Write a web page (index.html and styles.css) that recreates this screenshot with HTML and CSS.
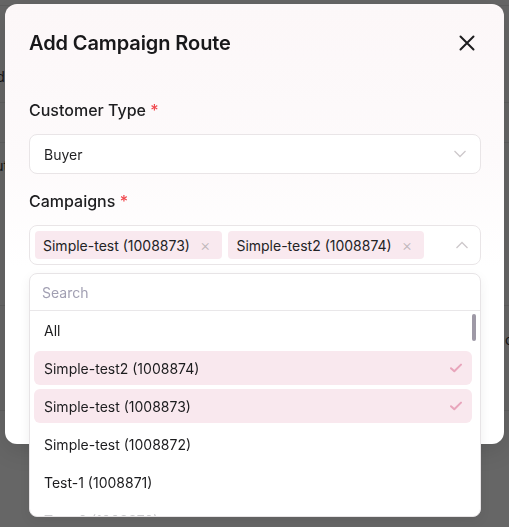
FILE: index.html
```html
<!DOCTYPE html>
<html lang="en">
<head>
    <meta charset="UTF-8">
    <meta name="viewport" content="width=device-width, initial-scale=1.0">
    <title>Add Campaign Route</title>
    <link rel="stylesheet" href="styles.css">
</head>
<body>
    <!-- page behind the overlay -->
    <div class="backdrop">
        <div class="bg-row bg-row-1"></div>
        <div class="bg-row bg-row-2"><span class="bg-text bg-left">Add</span></div>
        <div class="bg-row bg-row-3"></div>
        <div class="bg-row bg-row-4"><span class="bg-text bg-left">Routing</span></div>
        <div class="bg-row bg-row-5"><span class="bg-text bg-right">c</span></div>
        <div class="bg-row bg-row-6"></div>
    </div>

    <div class="modal">
        <div class="modal-header">
            <h1 class="modal-title">Add Campaign Route</h1>
            <button class="close-btn" aria-label="Close">
                <svg width="24" height="24" viewBox="0 0 24 24" fill="none" stroke="#1d1d1f" stroke-width="2" stroke-linecap="round">
                    <path d="M5.5 5.5L18.5 18.5M18.5 5.5L5.5 18.5"/>
                </svg>
            </button>
        </div>

        <div class="modal-body">
            <div class="form-item">
                <label class="form-label">Customer Type <span class="required">*</span></label>
                <div class="select">
                    <span class="select-value">Buyer</span>
                    <svg class="chevron" width="12" height="8" viewBox="0 0 12 8" fill="none" stroke="#cdc8cb" stroke-width="1.3">
                        <path d="M0.5 1L6 6.5L11.5 1"/>
                    </svg>
                </div>
            </div>

            <div class="form-item">
                <label class="form-label">Campaigns <span class="required">*</span></label>
                <div class="select-wrap">
                    <div class="select select-multi">
                        <div class="tags">
                            <span class="tag">Simple-test (1008873) <span class="tag-close">&times;</span></span>
                            <span class="tag">Simple-test2 (1008874) <span class="tag-close">&times;</span></span>
                        </div>
                        <svg class="chevron" width="12" height="8" viewBox="0 0 12 8" fill="none" stroke="#cdc8cb" stroke-width="1.3">
                            <path d="M0.5 7L6 1.5L11.5 7"/>
                        </svg>
                    </div>

                    <div class="dropdown">
                        <div class="dropdown-search">
                            <input type="text" placeholder="Search">
                        </div>
                        <ul class="option-list">
                            <li class="option">All</li>
                            <li class="option selected">Simple-test2 (1008874)
                                <svg width="12" height="10" viewBox="0 0 12 10" fill="none" stroke="#e8a5bb" stroke-width="2" stroke-linecap="round" stroke-linejoin="round"><path d="M1 5.2L4.3 8.3L11 1.6"/></svg>
                            </li>
                            <li class="option selected">Simple-test (1008873)
                                <svg width="12" height="10" viewBox="0 0 12 10" fill="none" stroke="#e8a5bb" stroke-width="2" stroke-linecap="round" stroke-linejoin="round"><path d="M1 5.2L4.3 8.3L11 1.6"/></svg>
                            </li>
                            <li class="option">Simple-test (1008872)</li>
                            <li class="option">Test-1 (1008871)</li>
                            <li class="option option-faded">Test-0 (1008870)</li>
                        </ul>
                        <div class="scroll-thumb"></div>
                    </div>
                </div>
            </div>
        </div>
    </div>
</body>
</html>
```

FILE: styles.css
```css
/* base */
body {
    margin: 0;
    height: 527px;
    overflow: hidden;
    background-color: #666666;
    font-family: 'Inter', 'Liberation Sans', sans-serif;
    color: #1d1d1f;
}

/* page behind the dimmed overlay */
.backdrop {
    font-size: 14px;
}
.bg-row {
    border-bottom: 1px solid #5e5e5e;
    box-sizing: border-box;
    overflow: hidden;
    white-space: nowrap;
}
.bg-row-1 { height: 6px; }
.bg-row-2 { height: 97px; padding-top: 62px; }
.bg-row-3 { height: 40px; }
.bg-row-4 { height: 163px; padding-top: 14px; }
.bg-row-5 { height: 105px; padding-top: 25px; text-align: right; }
.bg-row-6 { height: 116px; border-bottom: none; }
.bg-text {
    color: #151515;
    display: inline-block;
}
.bg-left { margin-left: -22px; }
.bg-right { margin-right: -4px; }

/* modal */
.modal {
    position: fixed; /* sits over the page */
    left: 5px;
    top: 4px;
    width: 499px;
    height: 440px;
    box-sizing: border-box;
    padding: 0 23px 0 24px;
    border-radius: 12px;
    background: linear-gradient(180deg, #fcf7f8 0%, #fdfafb 35%, #ffffff 60%);
    box-shadow: 0 6px 24px rgba(0, 0, 0, 0.12);
}
.modal-header {
    height: 78px;
    display: flex;
    align-items: center;
    justify-content: space-between;
}
.modal-title {
    margin: 0;
    font-size: 20px;
    line-height: 28px;
    font-weight: 600;
    color: #18181a;
    letter-spacing: -0.1px;
}
.close-btn {
    width: 24px;
    height: 24px;
    padding: 0;
    margin-right: 2px;
    border: none;
    background: none;
    display: flex;
}

.modal-body {
    padding-top: 16px;
}

/* form */
.form-item {
    margin-bottom: 15px;
}
.form-label {
    display: block;
    font-size: 16px;
    line-height: 24px;
    font-weight: 500;
    color: #1e1e20;
    margin-bottom: 12px;
}
.required {
    color: #f0474d;
}

.select {
    height: 40px;
    box-sizing: border-box;
    border: 1px solid #e9e5e7;
    border-radius: 8px;
    background-color: #fff;
    padding: 0 14px;
    display: flex;
    align-items: center;
    justify-content: space-between;
    font-size: 14px;
    color: #1f1f21;
}

.select-wrap {
    position: relative;
    margin-top: 1px;
}
.select-multi {
    padding: 0 12px 0 5px;
}
.tags {
    display: flex;
    gap: 6px;
}
.tag {
    height: 28px;
    display: flex;
    align-items: center;
    padding: 0 12px 0 8px;
    border-radius: 4px;
    background-color: #f9e9ef;
    font-size: 14px;
    color: #232325;
    white-space: nowrap;
}
.tag-close {
    margin-left: 10px;
    font-size: 16px;
    font-weight: 300;
    color: #bdb6ba;
}

/* dropdown popup */
.dropdown {
    position: absolute;
    top: calc(100% + 8px);
    left: 0;
    right: 0;
    height: 244px;
    box-sizing: border-box;
    border: 1px solid #e7e4e6;
    border-radius: 8px;
    background-color: #fff;
    overflow: hidden;
    box-shadow: 0 4px 12px rgba(0, 0, 0, 0.06);
    z-index: 10;
}
.dropdown-search {
    height: 36px;
    border-bottom: 1px solid #e9e7e9;
    display: flex;
    align-items: center;
}
.dropdown-search input {
    border: none;
    outline: none;
    background: none;
    padding: 0 12px;
    width: 100%;
    font-family: inherit;
    font-size: 14px;
    color: #1f1f21;
}
.dropdown-search input::placeholder {
    color: #a19fb2;
}

.option-list {
    list-style: none;
    margin: 0;
    padding: 2px 8px 0 4px;
}
.option {
    height: 34px;
    margin-bottom: 4px;
    padding: 0 10px;
    border-radius: 6px;
    display: flex;
    align-items: center;
    justify-content: space-between;
    font-size: 14px;
    color: #1c1c1e;
}
.option.selected {
    background-color: #f9e8ee;
}
.option-faded {
    color: #c9c9cc;
}

.scroll-thumb {
    position: absolute;
    top: 40px;
    right: 4px;
    width: 4px;
    height: 27px;
    border-radius: 2px;
    background-color: #9e99a6;
}
```
